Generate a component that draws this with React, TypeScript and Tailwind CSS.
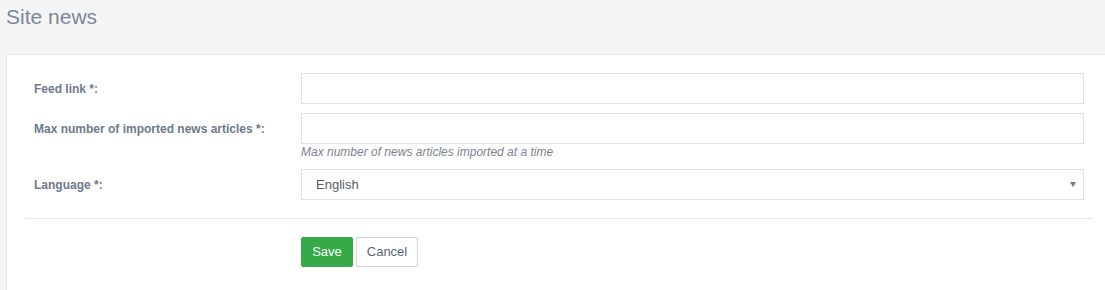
import React, { useState } from "react";

const labelCls =
  "w-[267px] shrink-0 text-[12px] font-bold text-[#6d7a8c] leading-[14px]";
const inputCls =
  "block w-full h-[31px] border border-[#dfe1e4] bg-white px-[14px] text-[13px] text-[#555c66] outline-none";

const App: React.FC = () => {
  const [feedLink, setFeedLink] = useState("");
  const [maxArticles, setMaxArticles] = useState("");
  const [language, setLanguage] = useState("English");

  return (
    <div
      className="min-h-[290px] w-[1105px] overflow-hidden bg-[#f5f5f5]"
      style={{ fontFamily: '"Liberation Sans", Arial, sans-serif' }}
    >
      <h1 className="h-[54px] pl-[6px] pt-[5px] text-[21px] leading-[24px] text-[#7b879a] font-normal">
        Site news
      </h1>

      <div className="ml-[6px] w-[1105px] min-h-[236px] border-l border-t border-[#e6e7e9] bg-white px-[18px] pt-[18px]">
        <div className="px-[9px]">
          <div className="flex items-center">
            <label className={labelCls}>Feed link *:</label>
            <input
              type="text"
              value={feedLink}
              onChange={(e) => setFeedLink(e.target.value)}
              className={inputCls}
            />
          </div>

          <div className="mt-[9px] flex items-center">
            <label className={labelCls}>Max number of imported news articles *:</label>
            <input
              type="text"
              value={maxArticles}
              onChange={(e) => setMaxArticles(e.target.value)}
              className={inputCls}
            />
          </div>
          <div className="mt-[1px] pl-[267px] text-[12px] italic leading-[14px] text-[#7b8494]">
            Max number of news articles imported at a time
          </div>

          <div className="mt-[10px] flex items-center">
            <label className={labelCls}>Language *:</label>
            <div className="relative w-full">
              <select
                value={language}
                onChange={(e) => setLanguage(e.target.value)}
                className={inputCls + " appearance-none"}
              >
                <option value="English">English</option>
              </select>
              <svg
                className="pointer-events-none absolute right-[8px] top-[13px]"
                width="6"
                height="5"
                viewBox="0 0 6 5"
              >
                <polygon points="0,0 6,0 3,5" fill="#6d7a8c" />
              </svg>
            </div>
          </div>
        </div>

        <div className="mt-[18px] h-px bg-[#e6e7e9]" />

        <div className="mt-[18px] flex gap-[3px] pl-[276px]">
          <button
            type="button"
            className="h-[30px] w-[52px] rounded-[2px] bg-[#35aa47] text-[13px] text-white"
          >
            Save
          </button>
          <button
            type="button"
            className="h-[30px] w-[62px] rounded-[2px] border border-[#d5d7da] bg-white text-[13px] text-[#5b6573]"
          >
            Cancel
          </button>
        </div>
      </div>
    </div>
  );
};

export default App;
